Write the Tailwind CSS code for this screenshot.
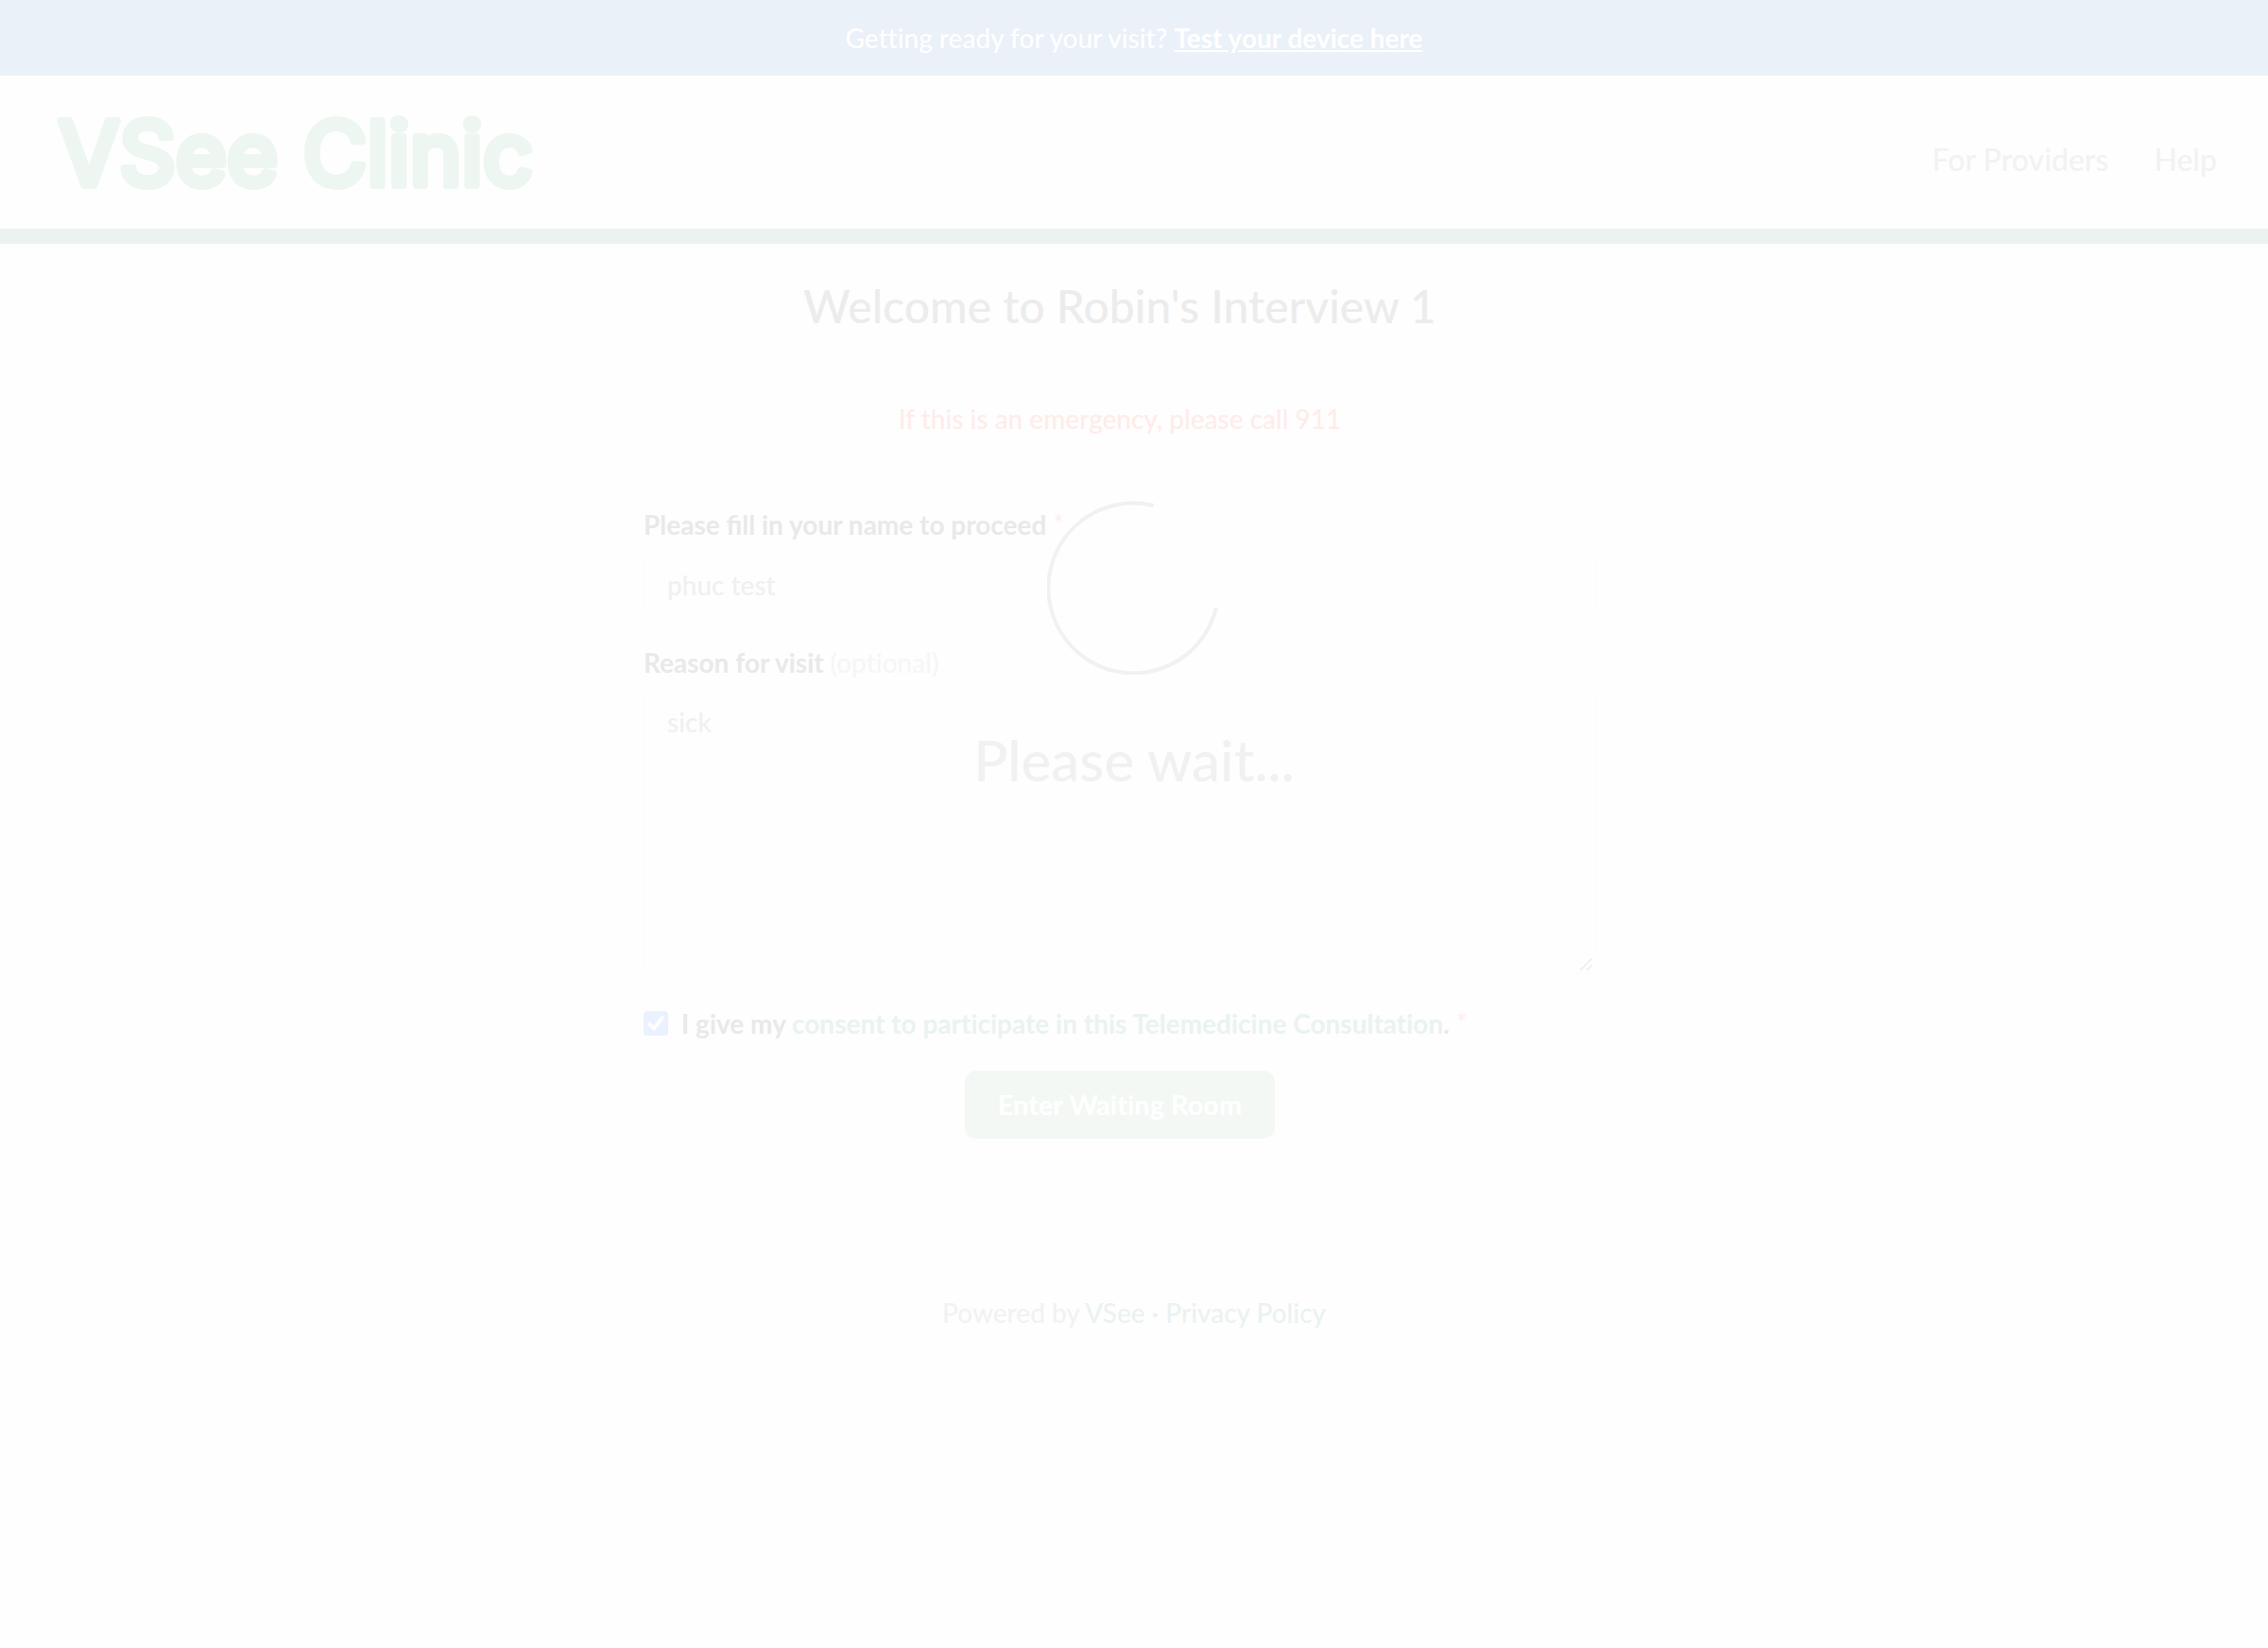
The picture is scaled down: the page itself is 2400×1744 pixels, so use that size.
<!DOCTYPE html>
<html lang="en">
<head>
<meta charset="utf-8">
<title>VSee Clinic</title>
<script src="https://cdn.jsdelivr.net/npm/@tailwindcss/browser@4"></script>
</head>
<body class="relative min-h-screen bg-[#fefefe] font-[Lato,sans-serif] text-[28px] leading-10 font-medium text-[#e9e9e9] [font-variant-ligatures:none]">
  <div class="flex h-20 items-center justify-center bg-[#eaf1f9] text-white">
    <p>Getting ready for your visit? <a href="#" class="font-bold underline">Test your device here</a></p>
  </div>
  <header class="flex h-[178px] items-center justify-between border-b-16 border-[#ebf2ef] pr-[54px] pl-14">
    <a href="#" aria-label="VSee Clinic">
      <svg class="h-32 w-[540px]" viewBox="0 0 540 128">
        <text x="6" y="99" font-family="Inter, sans-serif" font-weight="400" font-size="93" fill="#edf6f1" stroke="#edf6f1" stroke-width="8" stroke-linejoin="round">VSee Clinic</text>
      </svg>
    </a>
    <nav class="flex gap-12 pt-4 text-[32px] text-[#f2f2f2]">
      <a href="#">For Providers</a>
      <a href="#">Help</a>
    </nav>
  </header>
  <main>
    <div class="border-b border-[#fcfcfc] pt-[34px] pb-[18px] pr-[30px]">
      <h1 class="text-center text-[48px] leading-16 text-[#ececec]">Welcome to Robin's Interview 1</h1>
    </div>
    <form class="mx-auto w-full max-w-[1038px] pt-12 pr-[30px]">
      <p class="text-center text-[#ffece9]">If this is an emergency, please call 911</p>
      <label for="name" class="mt-18 block font-bold [font-variant-ligatures:normal]">Please fill in your name to proceed <span class="font-normal text-[#ffeeec]">*</span></label>
      <input id="name" type="text" value="phuc test" class="mt-[10px] block h-17 w-full rounded-lg border border-[#fcfcfc] px-6 text-[#f0f0f0]">
      <label for="reason" class="mt-7 block font-bold">Reason for visit <span class="font-medium text-[#f6f6f6]">(optional)</span></label>
      <div class="relative mt-[10px]">
        <textarea id="reason" class="block h-[300px] w-full resize-none rounded-lg border border-[#fcfcfc] px-6 py-3 text-[#f0f0f0]">sick</textarea>
        <svg class="absolute right-[2px] bottom-[2px] size-4" viewBox="0 0 16 16" fill="none" stroke="#ececec" stroke-width="1.6"><path d="M1 14L14 1M8 14L14 8"/></svg>
      </div>
      <div class="mt-8 flex items-center gap-[14px]">
        <span class="relative size-[26px]">
          <input id="consent" type="checkbox" checked class="block size-[26px] appearance-none rounded bg-[#ebf1ff]">
          <svg class="pointer-events-none absolute inset-0 size-[26px]" viewBox="0 0 26 26" fill="none" stroke="#fefefe" stroke-width="4"><path d="M5 12.500L11 18.500L21 5.500"/></svg>
        </span>
        <label for="consent" class="font-bold">I give my <a href="#" class="text-[#eaf3ef]">consent to participate in this Telemedicine Consultation</a>. <span class="font-normal text-[#ffeeec]">*</span></label>
      </div>
      <button type="button" class="mx-auto mt-[30px] block h-18 w-[328px] rounded-xl bg-[#f3f8f5] text-[29px] font-bold text-white">Enter Waiting Room</button>
    </form>
  </main>
  <footer class="pt-41 text-center text-[#f2f2f2]">Powered by <a href="#" class="text-[#ebf2f0]">VSee</a> <span class="text-[#ebf2f0]">·</span> <a href="#" class="text-[#ebf2f0]">Privacy Policy</a></footer>
  <div role="status" class="pointer-events-none absolute inset-x-0 top-[530px] flex flex-col items-center text-[#f1f1f1]">
    <svg class="size-[184px]" viewBox="0 0 184 184" fill="none" stroke="#f1f1f1" stroke-width="4"><path d="M113 5A90 90 0 1 0 179 113"/></svg>
    <p class="mt-[50px] text-[60px] leading-20">Please wait...</p>
  </div>
</body>
</html>
